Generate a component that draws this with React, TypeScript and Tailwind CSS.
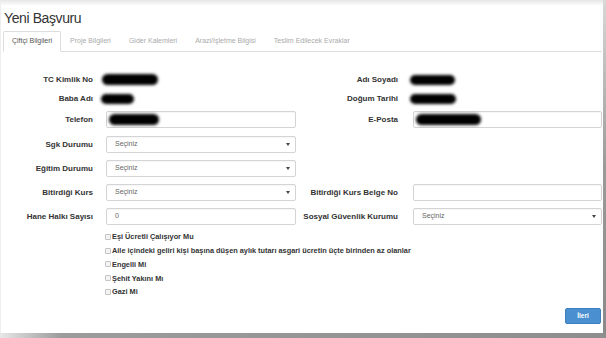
import React from "react";

const Blob = ({ w, h = 11, ml = 0 }: { w: number; h?: number; ml?: number }) => (
  <div
    className="bg-black rounded-full blur-[1.5px]"
    style={{ width: w, height: h, marginLeft: ml }}
  />
);

const Caret = () => (
  <svg width="4" height="3" viewBox="0 0 4 3" className="shrink-0">
    <path d="M0 0 L4 0 L2 3 Z" fill="#444" />
  </svg>
);

const Select = ({ w }: { w: number }) => (
  <div
    className="h-[17px] border border-[#d4d4d4] rounded-[2px] flex items-center justify-between pl-[8px] pr-[5px] text-[7px] text-[#666] bg-white shadow-[inset_0_1px_1px_rgba(0,0,0,0.04)]"
    style={{ width: w }}
  >
    <span>Seçiniz</span>
    <Caret />
  </div>
);

const Input = ({ w, children }: { w: number; children?: React.ReactNode }) => (
  <div
    className="h-[17px] border border-[#d4d4d4] rounded-[2px] flex items-center pl-[2px] text-[7px] text-[#666] bg-white shadow-[inset_0_1px_1px_rgba(0,0,0,0.04)]"
    style={{ width: w }}
  >
    {children}
  </div>
);

const Label = ({ children, w }: { children: React.ReactNode; w: number }) => (
  <div className="text-right font-bold text-[8px] text-[#333] shrink-0" style={{ width: w }}>
    {children}
  </div>
);

const Row = ({
  l1,
  c1,
  l2,
  c2,
  className = "",
}: {
  l1?: React.ReactNode;
  c1?: React.ReactNode;
  l2?: React.ReactNode;
  c2?: React.ReactNode;
  className?: string;
}) => (
  <div className={"flex items-center h-[17px] " + className}>
    <Label w={92}>{l1}</Label>
    <div className="w-[190px] ml-[13px] shrink-0 flex items-center">{c1}</div>
    <Label w={102}>{l2}</Label>
    <div className="w-[189px] ml-[15px] shrink-0 flex items-center">{c2}</div>
  </div>
);

const Check = ({ children }: { children: React.ReactNode }) => (
  <div className="flex items-center h-[13.75px] pl-[104px]">
    <div className="w-[6px] h-[6px] border border-[#c4c4c4] bg-[#f4f4f4] rounded-[1px] mr-[1px]" />
    <span className="font-bold text-[7.35px] text-[#333] whitespace-nowrap">{children}</span>
  </div>
);

const tabs = [
  "Çiftçi Bilgileri",
  "Proje Bilgileri",
  "Gider Kalemleri",
  "Arazi/İşletme Bilgisi",
  "Teslim Edilecek Evraklar",
];

export default function App() {
  return (
    <div className="w-[606px] h-[338px] flex flex-col bg-white overflow-hidden font-['Liberation_Sans',Arial,sans-serif]">
      <div className="flex flex-1 min-h-0">
        <div className="flex-1 flex flex-col border-l border-[#eee]">
          <div className="h-[6px] bg-gradient-to-b from-[#e6e6e6] to-white" />
          <div className="mt-[2px] h-[20px] leading-[20px] text-[14px] tracking-[-0.4px] text-[#333] pl-[3px]">
            Yeni Başvuru
          </div>
          <div className="mt-[3px] ml-[2px] mr-[1px] flex border-b border-[#ddd] h-[21px]">
            {tabs.map((t, i) => (
              <div
                key={t}
                className={
                  "px-[8px] flex items-center text-[7px] whitespace-nowrap " +
                  (i === 0
                    ? "border border-[#ddd] border-b-white bg-white rounded-t-[2px] -mb-px text-[#555]"
                    : "border border-transparent text-[#aaa]")
                }
              >
                {t}
              </div>
            ))}
          </div>
          <div className="mt-[19px] flex flex-col">
            <Row
              l1="TC Kimlik No"
              c1={<Blob w={56} ml={-4} />}
              l2="Adı Soyadı"
              c2={<Blob w={45} h={10} ml={-3} />}
            />
            <Row
              className="mt-[2px]"
              l1="Baba Adı"
              c1={<Blob w={33} h={10} ml={-5} />}
              l2="Doğum Tarihi"
              c2={<Blob w={46} h={10} ml={-3} />}
            />
            <Row
              className="mt-[4px]"
              l1="Telefon"
              c1={
                <Input w={190}>
                  <Blob w={50} />
                </Input>
              }
              l2="E-Posta"
              c2={
                <Input w={189}>
                  <Blob w={65} />
                </Input>
              }
            />
            <Row className="mt-[8px]" l1="Sgk Durumu" c1={<Select w={190} />} />
            <Row className="mt-[7px]" l1="Eğitim Durumu" c1={<Select w={190} />} />
            <Row
              className="mt-[7px]"
              l1="Bitirdiği Kurs"
              c1={<Select w={190} />}
              l2="Bitirdiği Kurs Belge No"
              c2={<Input w={189} />}
            />
            <Row
              className="mt-[7px]"
              l1="Hane Halkı Sayısı"
              c1={
                <Input w={190}>
                  <span className="pl-[6px]">0</span>
                </Input>
              }
              l2="Sosyal Güvenlik Kurumu"
              c2={<Select w={189} />}
            />
            <div className="mt-[5px] flex flex-col">
              <Check>Eşi Ücretli Çalışıyor Mu</Check>
              <Check>
                Aile içindeki geliri kişi başına düşen aylık tutarı asgari ücretin üçte birinden az olanlar
              </Check>
              <Check>Engelli Mi</Check>
              <Check>Şehit Yakını Mı</Check>
              <Check>Gazi Mi</Check>
            </div>
            <div className="mt-[9px] flex justify-end pr-[2px]">
              <div className="w-[36px] h-[16px] rounded-[2px] bg-[#4a8fd0] border border-[#3f7fc0] flex items-center justify-center text-white text-[6.5px] font-bold">
                İleri
              </div>
            </div>
          </div>
        </div>
        <div className="w-[3px] bg-gradient-to-b from-[#d8d8d8] via-[#9a9a9a] to-[#8a8a8a]" />
      </div>
      <div className="h-[5px] bg-gradient-to-r from-[#e8e8e8] via-[#9c9c9c] via-10% to-[#8e8e8e]" />
    </div>
  );
}
